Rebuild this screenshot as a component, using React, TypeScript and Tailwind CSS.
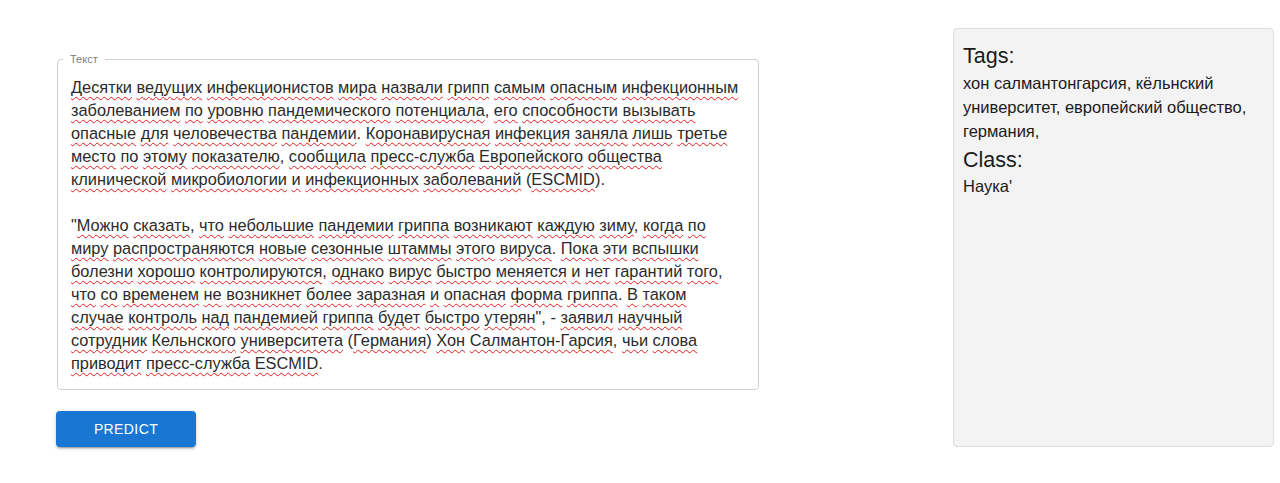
import React from 'react';

const paragraphs: string[][] = [
  [
    'Десятки ведущих инфекционистов мира назвали грипп самым опасным инфекционным',
    'заболеванием по уровню пандемического потенциала, его способности вызывать',
    'опасные для человечества пандемии. Коронавирусная инфекция заняла лишь третье',
    'место по этому показателю, сообщила пресс-служба Европейского общества',
    'клинической микробиологии и инфекционных заболеваний (ESCMID).',
  ],
  [
    '"Можно сказать, что небольшие пандемии гриппа возникают каждую зиму, когда по',
    'миру распространяются новые сезонные штаммы этого вируса. Пока эти вспышки',
    'болезни хорошо контролируются, однако вирус быстро меняется и нет гарантий того,',
    'что со временем не возникнет более заразная и опасная форма гриппа. В таком',
    'случае контроль над пандемией гриппа будет быстро утерян", - заявил научный',
    'сотрудник Кельнского университета (Германия) Хон Салмантон-Гарсия, чьи слова',
    'приводит пресс-служба ESCMID.',
  ],
];

const wordRe = /([А-Яа-яЁёA-Za-z]+(?:-[А-Яа-яЁёA-Za-z]+)*)/;

// spellcheck-like squiggles under each word
function Line({ text }: { text: string }) {
  const parts = text.split(wordRe);
  return (
    <div className="whitespace-pre h-[23px]">
      {parts.map((p, i) =>
        i % 2 === 1 ? (
          <span
            key={i}
            className="underline decoration-wavy decoration-[#e51c1c] decoration-[1.2px] underline-offset-[3px]"
          >
            {p}
          </span>
        ) : (
          <span key={i}>{p}</span>
        )
      )}
    </div>
  );
}

export default function App() {
  return (
    <div className="w-[1280px] h-[483px] bg-white flex pl-[56px] font-['Liberation_Sans',Arial,sans-serif]">
      <div className="w-[703px] pt-[52px] flex flex-col">
        <fieldset className="border border-[#cfcfcf] rounded-[4px] px-[13px] pt-[10px] pb-[14px] ml-[1px]">
          <legend className="-ml-[8px] px-[7px] text-[11px] leading-[14px] text-[#808080]">Текст</legend>
          <div className="text-[16.35px] leading-[23px] text-[#2b2b2b]">
            {paragraphs[0].map((l, i) => (
              <Line key={i} text={l} />
            ))}
            <div className="h-[23px]" />
            {paragraphs[1].map((l, i) => (
              <Line key={i} text={l} />
            ))}
          </div>
        </fieldset>
        <div className="mt-[21px]">
          <button className="w-[140px] h-[36px] rounded-[4px] bg-[#1976d2] text-white text-[14px] tracking-[0.4px] shadow-[0_3px_1px_-2px_rgba(0,0,0,0.2),0_2px_2px_0_rgba(0,0,0,0.14),0_1px_5px_0_rgba(0,0,0,0.12)]">
            PREDICT
          </button>
        </div>
      </div>
      <div className="ml-auto mr-[6px] mt-[28px] w-[321px] h-[419px] bg-[#f3f3f3] border border-[#dedede] rounded-[4px] px-[9px] pt-[13px] text-[#1a1a1a]">
        <div className="text-[21.5px] leading-[28px]">Tags:</div>
        <div className="text-[16.5px] leading-[24px] mt-[1px]">
          хон салмантонгарсия, кёльнский университет, европейский общество, германия,
        </div>
        <div className="text-[21.5px] leading-[28px] mt-[3px]">Class:</div>
        <div className="text-[16.5px] leading-[24px]">Наука'</div>
      </div>
    </div>
  );
}
